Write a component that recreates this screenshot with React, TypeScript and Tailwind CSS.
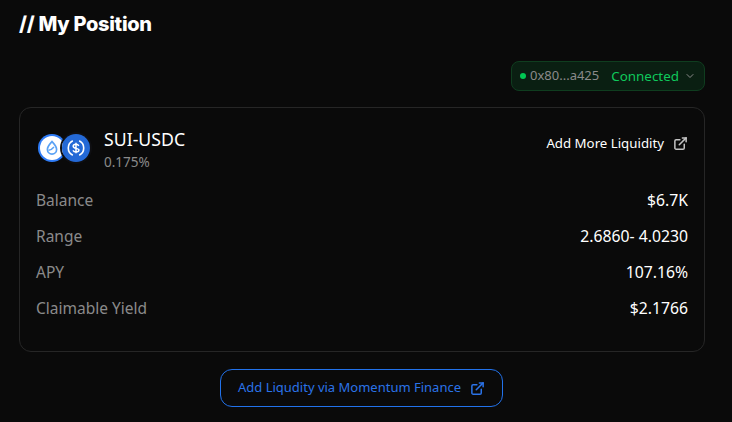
import { ChevronDown, ExternalLink } from "lucide-react";

const rows = [
  { label: "Balance", value: "$6.7K" },
  { label: "Range", value: "2.6860- 4.0230" },
  { label: "APY", value: "107.16%" },
  { label: "Claimable Yield", value: "$2.1766" },
];

function SuiIcon() {
  return (
    <svg viewBox="0 0 28 28" className="h-[28px] w-[28px]">
      <circle cx="14" cy="14" r="14" fill="#2f7cf6" />
      <circle cx="14" cy="14" r="12" fill="#ffffff" />
      <path
        d="M14 7.500c2.200 2.600 4.600 4.800 4.600 8a4.600 4.600 0 0 1-9.200 0c0-3.200 2.400-5.400 4.600-8Z"
        fill="none"
        stroke="#5aa2f5"
        strokeWidth="1.700"
      />
      <path d="M10.500 16.200c2-.2 4-1.300 5.500-3.200" fill="none" stroke="#5aa2f5" strokeWidth="1.400" />
    </svg>
  );
}

function UsdcIcon() {
  return (
    <svg viewBox="0 0 28 28" className="h-[28px] w-[28px]">
      <circle cx="14" cy="14" r="14" fill="#2469d6" />
      <path d="M10.800 6.800a8 8 0 0 0 0 14.400" fill="none" stroke="#ffffff" strokeWidth="1.600" />
      <path d="M17.200 6.800a8 8 0 0 1 0 14.400" fill="none" stroke="#ffffff" strokeWidth="1.600" />
      <path
        d="M16.800 11.800c-.5-1-1.500-1.500-2.800-1.500-1.600 0-2.800.8-2.800 2 0 2.900 5.700 1.300 5.700 3.800 0 1.200-1.300 2-2.900 2-1.400 0-2.500-.6-3-1.700M14 8.800v10.400"
        fill="none"
        stroke="#ffffff"
        strokeWidth="1.500"
      />
    </svg>
  );
}

export default function App() {
  return (
    <div className="h-[422px] w-[732px] overflow-hidden bg-[#0a0a0a] pt-[12px] pr-[27px] pl-[19px] font-['Noto_Sans',sans-serif] text-white">
      <h2 className="font-['Inter',sans-serif] text-[20px] leading-[24px] font-extrabold tracking-[-0.3px]">// My Position</h2>

      <div className="mt-[25px] flex justify-end">
        <button className="flex h-[30px] w-[194px] items-center rounded-lg border border-[#0f3d1f] bg-[#0a1f12] pl-[8px] text-[13.4px]">
          <span className="h-[6px] w-[6px] rounded-full bg-[#00c853]" />
          <span className="ml-[4px] text-[13px] text-[#8a8a8a]">0x80...a425</span>
          <span className="ml-[12px] text-[#0fc95c]">Connected</span>
          <ChevronDown className="ml-[5px] h-[12px] w-[12px] text-[#8a8a8a]" />
        </button>
      </div>

      <div className="mt-[16px] h-[245px] rounded-xl border border-[#262626] px-[16px] pt-[17px]">
        <div className="flex items-start justify-between">
          <div className="flex items-start">
            <div className="mt-[9px] ml-[2px] flex">
              <SuiIcon />
              <div className="-ml-[4px] rounded-full ring-2 ring-[#0f0f12]">
                <UsdcIcon />
              </div>
            </div>
            <div className="ml-[14px]">
              <div className="text-[17.700px] leading-[28px]">SUI-USDC</div>
              <div className="text-[13.500px] leading-[18px] text-[#8a8a8a]">0.175%</div>
            </div>
          </div>
          <a className="mt-[7px] flex items-center gap-[9px] text-[13.250px] leading-[22px]">
            Add More Liquidity
            <ExternalLink className="h-[15px] w-[15px] text-[#c4c4c4]" strokeWidth={2.4} />
          </a>
        </div>

        <div className="mt-[18px] flex flex-col gap-[12px]">
          {rows.map((row) => (
            <div key={row.label} className="flex h-[24px] items-center justify-between">
              <span className="text-[15.500px] text-[#8a8a8a]">{row.label}</span>
              <span className="text-[15.750px]">{row.value}</span>
            </div>
          ))}
        </div>
      </div>

      <div className="mt-[17px] flex justify-center pr-[1px]">
        <a className="flex h-[38px] w-[283px] items-center justify-center gap-[9px] rounded-xl border border-[#2272eb] text-[13px] text-[#2b73e8]">
          Add Liqudity via Momentum Finance
          <ExternalLink className="h-[15px] w-[15px]" strokeWidth={2.4} />
        </a>
      </div>
    </div>
  );
}
